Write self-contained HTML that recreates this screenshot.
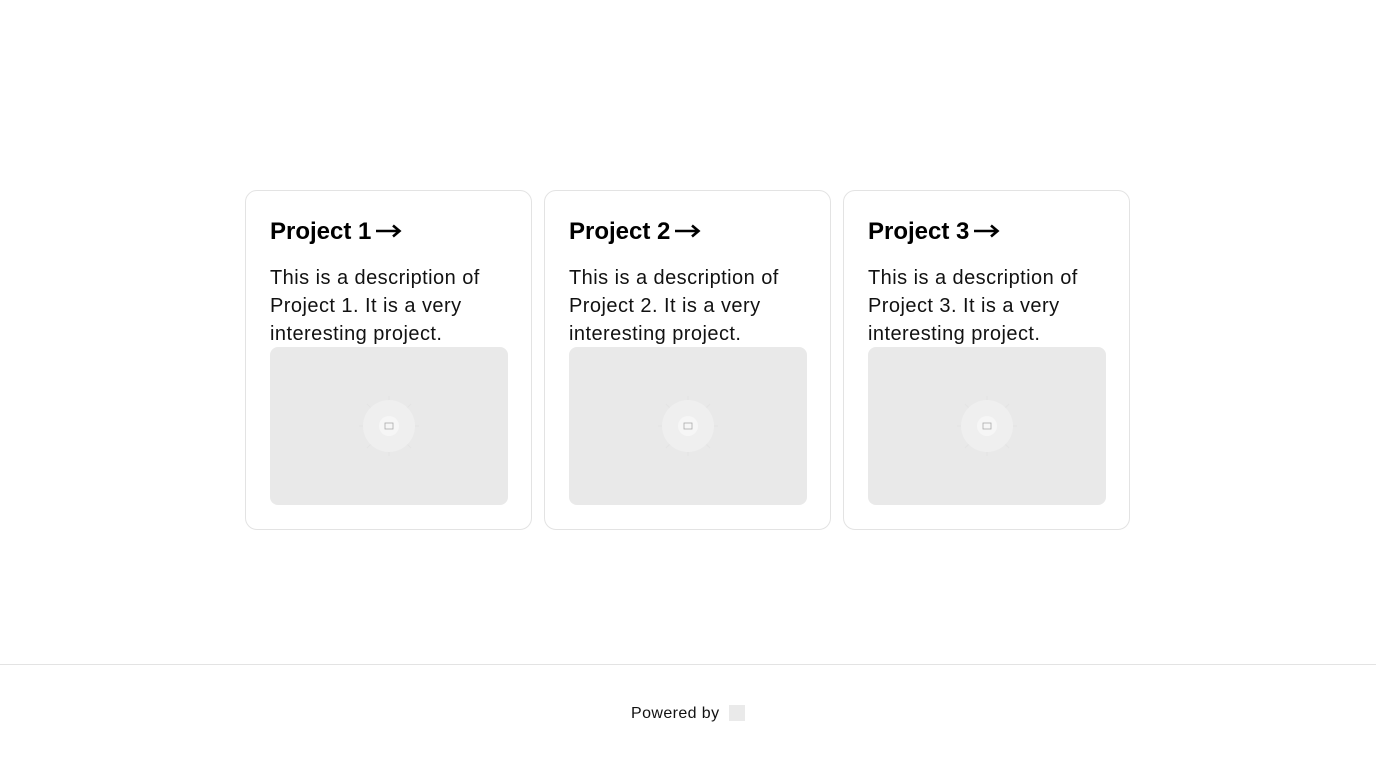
<!DOCTYPE html>
<html><head><meta charset="utf-8"><style>
*{box-sizing:border-box;margin:0;padding:0}
html,body{width:1376px;height:768px;background:#fff;overflow:hidden;font-family:"Liberation Sans",sans-serif;color:#111}
.card{position:absolute;top:190px;width:287px;height:340px;border:1px solid #e3e3e3;border-radius:12px;padding:0 24px}
.card h2{position:absolute;left:24px;top:25px;font-size:24px;font-weight:bold;line-height:32px;color:#000;white-space:nowrap}
.card h2 svg{vertical-align:middle;margin-left:4px;margin-top:-3px}
.card p{position:absolute;left:24px;top:73px;font-size:20px;line-height:28px;color:#111;white-space:nowrap;letter-spacing:0.45px}
.img{position:absolute;left:24px;top:156px;width:238px;height:158px;background:#e9e9e9;border-radius:8px}
.img svg{position:absolute;left:89px;top:49px}
.foot{position:absolute;top:664px;left:0;width:1376px;border-top:1px solid #e3e3e3}
.pw{position:absolute;top:705px;left:631px;font-size:16px;line-height:18px;color:#111;letter-spacing:0.4px}
.sq{position:absolute;left:729px;top:705px;width:16px;height:16px;background:#eaeaea}
</style></head><body>
<div class="card" style="left:245px"><h2>Project 1<svg width="27" height="14" viewBox="0 0 27 14"><path d="M1 7H24M18 1.5L24.5 7L18 12.5" fill="none" stroke="#000" stroke-width="2.6"/></svg></h2><p>This is a description of<br>Project 1. It is a very<br>interesting project.</p><div class="img"><svg width="60" height="60" viewBox="0 0 60 60"><g stroke="#e4e4e4" stroke-width="1"><line x1="30" y1="0" x2="30" y2="60"/><line x1="0" y1="30" x2="60" y2="30"/><line x1="8" y1="8" x2="52" y2="52"/><line x1="52" y1="8" x2="8" y2="52"/></g><circle cx="30" cy="30" r="26" fill="#efefef"/><circle cx="30" cy="30" r="10" fill="#f6f6f6"/><rect x="26" y="27" width="8" height="6" fill="none" stroke="#aaa" stroke-width="0.8"/></svg></div></div>
<div class="card" style="left:544px"><h2>Project 2<svg width="27" height="14" viewBox="0 0 27 14"><path d="M1 7H24M18 1.5L24.5 7L18 12.5" fill="none" stroke="#000" stroke-width="2.6"/></svg></h2><p>This is a description of<br>Project 2. It is a very<br>interesting project.</p><div class="img"><svg width="60" height="60" viewBox="0 0 60 60"><g stroke="#e4e4e4" stroke-width="1"><line x1="30" y1="0" x2="30" y2="60"/><line x1="0" y1="30" x2="60" y2="30"/><line x1="8" y1="8" x2="52" y2="52"/><line x1="52" y1="8" x2="8" y2="52"/></g><circle cx="30" cy="30" r="26" fill="#efefef"/><circle cx="30" cy="30" r="10" fill="#f6f6f6"/><rect x="26" y="27" width="8" height="6" fill="none" stroke="#aaa" stroke-width="0.8"/></svg></div></div>
<div class="card" style="left:843px"><h2>Project 3<svg width="27" height="14" viewBox="0 0 27 14"><path d="M1 7H24M18 1.5L24.5 7L18 12.5" fill="none" stroke="#000" stroke-width="2.6"/></svg></h2><p>This is a description of<br>Project 3. It is a very<br>interesting project.</p><div class="img"><svg width="60" height="60" viewBox="0 0 60 60"><g stroke="#e4e4e4" stroke-width="1"><line x1="30" y1="0" x2="30" y2="60"/><line x1="0" y1="30" x2="60" y2="30"/><line x1="8" y1="8" x2="52" y2="52"/><line x1="52" y1="8" x2="8" y2="52"/></g><circle cx="30" cy="30" r="26" fill="#efefef"/><circle cx="30" cy="30" r="10" fill="#f6f6f6"/><rect x="26" y="27" width="8" height="6" fill="none" stroke="#aaa" stroke-width="0.8"/></svg></div></div>
<div class="foot"></div>
<div class="pw">Powered by</div><div class="sq"></div>
</body></html>
